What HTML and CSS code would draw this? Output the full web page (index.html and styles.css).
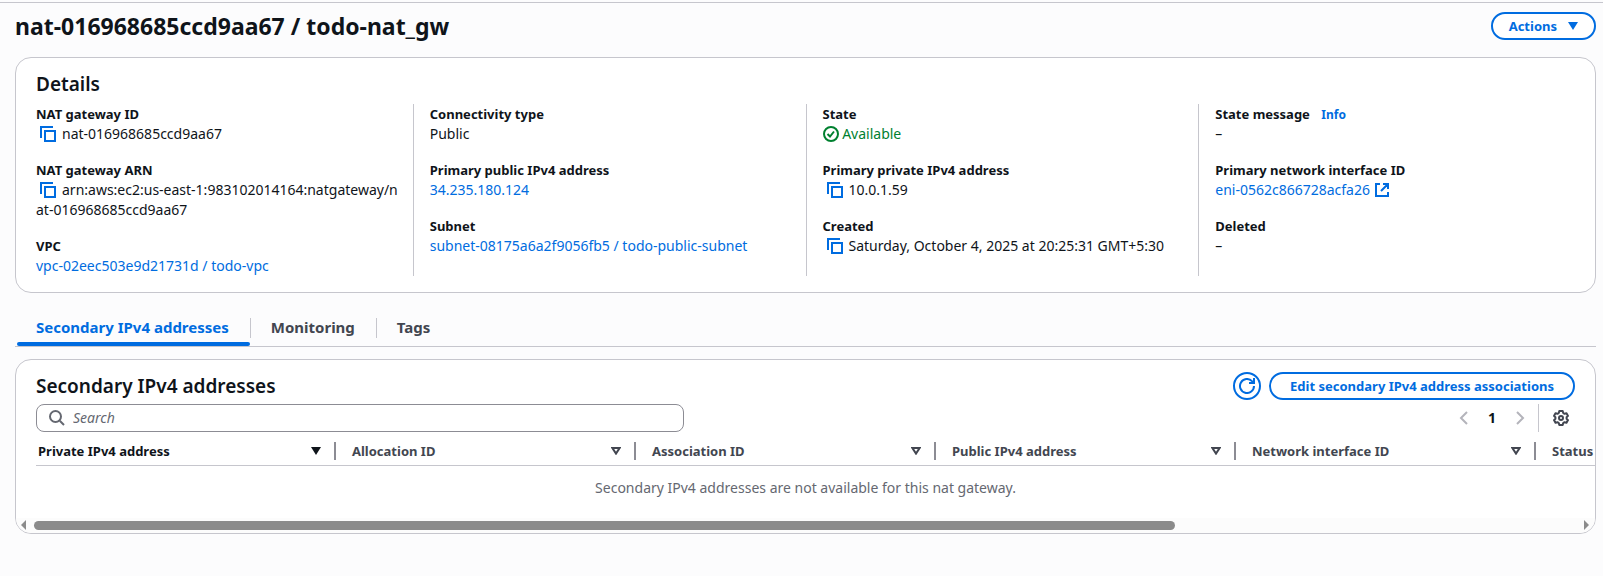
FILE: index.html
```html
<!DOCTYPE html>
<html lang="en">
<head>
<meta charset="utf-8">
<meta name="viewport" content="width=device-width, initial-scale=1">
<title>nat-016968685ccd9aa67 / todo-nat_gw</title>
<link rel="stylesheet" href="styles.css">
</head>
<body>
<svg class="defs" aria-hidden="true">
  <symbol id="copy" viewBox="0 0 16 16"><path d="M1 12V1h12M5 5h10v10H5z" fill="none" stroke="currentColor" stroke-width="2"/></symbol>
  <symbol id="sort" viewBox="0 0 10 8"><path d="M1.4 1h7.2L5 6.6z" fill="none" stroke="currentColor" stroke-width="2"/></symbol>
  <symbol id="caret" viewBox="0 0 10 8"><path d="M0 0h10L5 8z" fill="currentColor"/></symbol>
</svg>
<main class="page">
  <header class="page-header">
    <h1>nat-016968685ccd9aa67 / todo-nat_gw</h1>
    <button class="btn" type="button">Actions <svg class="caret"><use href="#caret"/></svg></button>
  </header>

  <section class="card details">
    <h2>Details</h2>
    <div class="columns">
      <dl class="column">
        <div><dt>NAT gateway ID</dt><dd><button class="copy" type="button" aria-label="Copy NAT gateway ID"><svg><use href="#copy"/></svg></button>nat-016968685ccd9aa67</dd></div>
        <div><dt>NAT gateway ARN</dt><dd><button class="copy" type="button" aria-label="Copy NAT gateway ARN"><svg><use href="#copy"/></svg></button>arn:aws:ec2:us-east-1:983102014164:natgateway/nat-016968685ccd9aa67</dd></div>
        <div><dt>VPC</dt><dd><a href="#">vpc-02eec503e9d21731d / todo-vpc</a></dd></div>
      </dl>
      <dl class="column">
        <div><dt>Connectivity type</dt><dd>Public</dd></div>
        <div><dt>Primary public IPv4 address</dt><dd><a href="#">34.235.180.124</a></dd></div>
        <div><dt>Subnet</dt><dd><a href="#">subnet-08175a6a2f9056fb5 / todo-public-subnet</a></dd></div>
      </dl>
      <dl class="column">
        <div><dt>State</dt><dd class="ok"><svg class="icon" viewBox="0 0 16 16"><g fill="none" stroke="currentColor" stroke-width="2"><circle cx="8" cy="8" r="7"/><path d="M4.500 8l2.500 2.500 4-5"/></g></svg> Available</dd></div>
        <div><dt>Primary private IPv4 address</dt><dd><button class="copy" type="button" aria-label="Copy address"><svg><use href="#copy"/></svg></button>10.0.1.59</dd></div>
        <div><dt>Created</dt><dd><button class="copy" type="button" aria-label="Copy date"><svg><use href="#copy"/></svg></button>Saturday, October 4, 2025 at 20:25:31 GMT+5:30</dd></div>
      </dl>
      <dl class="column">
        <div><dt>State message <a class="info" href="#">Info</a></dt><dd>–</dd></div>
        <div><dt>Primary network interface ID</dt><dd><a href="#">eni-0562c866728acfa26 <svg class="icon" viewBox="0 0 16 16"><path d="M6 2H2v12h12v-4M9 2h5v5M14 2L7 9" fill="none" stroke="currentColor" stroke-width="2"/></svg></a></dd></div>
        <div><dt>Deleted</dt><dd>–</dd></div>
      </dl>
    </div>
  </section>

  <div class="tabs" role="tablist">
    <button class="tab active" type="button" role="tab" aria-selected="true">Secondary IPv4 addresses</button>
    <button class="tab" type="button" role="tab" aria-selected="false">Monitoring</button>
    <button class="tab" type="button" role="tab" aria-selected="false">Tags</button>
  </div>

  <section class="card list">
    <div class="list-head">
      <h2>Secondary IPv4 addresses</h2>
      <div class="actions">
        <button class="btn round" type="button" aria-label="Refresh"><svg viewBox="0 0 16 16"><path d="M15 8a7 7 0 1 1-2-4.900L15 5M15 0v5h-5" fill="none" stroke="currentColor" stroke-width="2"/></svg></button>
        <button class="btn wide" type="button">Edit secondary IPv4 address associations</button>
      </div>
    </div>
    <div class="tools">
      <label class="search">
        <svg viewBox="0 0 16 16"><path d="M11 11l4 4M12 6.500a5.500 5.500 0 1 1-11 0a5.500 5.500 0 0 1 11 0z" fill="none" stroke="currentColor" stroke-width="2"/></svg>
        <input type="search" placeholder="Search" aria-label="Search">
      </label>
      <div class="pager">
        <button class="step" type="button" aria-label="Previous page"><svg viewBox="0 0 16 16"><path d="M11 2L5 8l6 6" fill="none" stroke="currentColor" stroke-width="2"/></svg></button>
        <button class="step current" type="button">1</button>
        <button class="step" type="button" aria-label="Next page"><svg viewBox="0 0 16 16"><path d="M5 2l6 6-6 6" fill="none" stroke="currentColor" stroke-width="2"/></svg></button>
        <button class="gear" type="button" aria-label="Preferences"><svg viewBox="0 0 16 16"><g fill="none" stroke="currentColor" stroke-width="2" stroke-linejoin="round"><path d="M6.300 1h3.400l.5 2 1.300.8 2-.6 1.500 2.700L13.600 7.300v1.400L15 10.100l-1.500 2.700-2-.6-1.300.8-.5 2H6.300l-.5-2-1.300-.8-2 .6L1 10.100l1.400-1.400V7.300L1 5.900l1.500-2.700 2 .6L5.800 3z"/><circle cx="8" cy="8" r="2"/></g></svg></button>
      </div>
    </div>
    <div class="scroll">
      <table>
        <thead><tr>
          <th class="sorted"><div>Private IPv4 address<svg class="caret"><use href="#caret"/></svg></div></th>
          <th><div>Allocation ID<svg class="caret"><use href="#sort"/></svg></div></th>
          <th><div>Association ID<svg class="caret"><use href="#sort"/></svg></div></th>
          <th><div>Public IPv4 address<svg class="caret"><use href="#sort"/></svg></div></th>
          <th><div>Network interface ID<svg class="caret"><use href="#sort"/></svg></div></th>
          <th><div>Status</div></th>
        </tr></thead>
        <tbody><tr><td colspan="6"><div class="empty">Secondary IPv4 addresses are not available for this nat gateway.</div></td></tr></tbody>
      </table>
    </div>
    <div class="scrollbar" aria-hidden="true">
      <svg viewBox="0 0 5 10"><path d="M5 0v10L0 5z"/></svg>
      <div class="track"><div class="thumb"></div></div>
      <svg viewBox="0 0 5 10"><path d="M0 0v10l5-5z"/></svg>
    </div>
  </section>
</main>
</body>
</html>
```
FILE: styles.css
```css
* { box-sizing: border-box; }
body {
  margin: 0;
  background: #fcfcfd;
  color: #0f141a;
  font: 14px/20px "Noto Sans", "Open Sans", sans-serif;
}
h1, h2, dl, dd { margin: 0; }
a { color: #006ce0; text-decoration: none; }
button { font: inherit; color: inherit; background: none; border: 0; padding: 0; cursor: pointer; }
.defs { display: none; }

.page { margin-top: 2px; border-top: 1px solid #c6c6cd; padding: 7px 7px 24px 15px; }
.page-header { display: flex; justify-content: space-between; align-items: center; margin-bottom: 15px; }
h1 { font-size: 23px; line-height: 32px; }
h2 { font-size: 19px; line-height: 28px; font-weight: 600; }

.btn {
  display: inline-flex; align-items: center; justify-content: center; gap: 11px;
  height: 28px; padding: 0 16px;
  border: 2px solid #006ce0; border-radius: 20px;
  background: #fff; color: #006ce0; font-size: 13px; font-weight: 700;
}
.wide { padding: 0 19px; }
.round { width: 28px; padding: 0; }
.round svg { width: 16px; height: 16px; flex: none; }
.caret { width: 10px; height: 8px; flex: none; }

.card { border: 1px solid #c6c6cd; border-radius: 16px; background: #fff; }
.details { padding: 12px 20px 16px; }
.details h2 { margin-bottom: 6px; }
.columns { display: grid; grid-template-columns: repeat(4, 1fr); margin: 0 -16px; }
.column { display: flex; flex-direction: column; gap: 16px; padding: 0 12px 0 16px; min-width: 0; }
.column + .column { border-left: 1px solid #c6c6cd; }
dt { font-size: 13px; font-weight: 700; }
dd { word-break: break-all; }
.copy { padding: 0 6px 0 4px; vertical-align: middle; height: 16px; margin-top: -2px; }
.copy svg { display: block; width: 16px; height: 16px; color: #006ce0; }
.icon { width: 16px; height: 16px; vertical-align: middle; margin: -4px 0 -2px; }
.ok { color: #00802f; }
.info { font-size: 12px; line-height: 16px; margin-left: 8px; }

.tabs { display: flex; margin-top: 16px; border-bottom: 1px solid #c6c6cd; }
.tab {
  position: relative;
  height: 38px; padding: 0 21px 2px; margin-bottom: -1px;
  font-size: 15px; line-height: 20px; font-weight: 700; color: #424650;
}
.tab + .tab::before { content: ""; position: absolute; left: 0; top: 9px; height: 20px; border-left: 1px solid #c6c6cd; }
.active { color: #006ce0; }
.active::after { content: ""; position: absolute; left: 2px; right: 0; bottom: 1px; height: 4px; border-radius: 2px; background: #006ce0; }

.list { margin-top: 12px; overflow: hidden; }
.list-head { display: flex; justify-content: space-between; align-items: center; padding: 12px 20px 4px; }
.actions { display: flex; gap: 8px; }
.tools { display: flex; justify-content: space-between; padding: 0 20px; }
.search {
  display: flex; align-items: center; gap: 8px;
  width: 648px; height: 28px; padding: 0 12px;
  border: 1px solid #8c8c94; border-radius: 8px; color: #656871;
}
.search svg { width: 16px; height: 16px; flex: none; }
.search input { flex: 1; min-width: 0; border: 0; outline: 0; padding: 0; background: none; font: inherit; }
.search input::placeholder { color: #656871; font-style: italic; opacity: 1; }
.pager { display: flex; align-items: center; }
.step { display: grid; place-items: center; width: 28px; height: 28px; color: #b4b4bb; }
.step svg, .gear svg { width: 16px; height: 16px; display: block; }
.current { color: #0f141a; font-weight: 700; }
.gear { height: 28px; margin-left: 4px; padding: 0 6px 0 14px; border-left: 1px solid #c6c6cd; color: #424650; }

.scroll { overflow: hidden; container-type: inline-size; padding-left: 20px; }
table { width: 2110px; table-layout: fixed; border-collapse: collapse; }
th { width: 300px; height: 33px; padding: 0; text-align: left; font-size: 13px; font-weight: 700; color: #424650; border-bottom: 1px solid #c6c6cd; }
th:last-child { width: auto; }
th div { display: flex; align-items: center; justify-content: space-between; height: 18px; margin-top: 6px; padding: 0 13px 0 16px; border-right: 2px solid #8c8c94; }
th:first-child div { padding-left: 2px; }
.sorted { color: #0f141a; }
td { padding: 0; }
.empty { width: calc(100cqw - 20px); padding: 12px 0 20px; text-align: center; color: #656871; }
.scrollbar { display: flex; align-items: center; gap: 8px; height: 15px; padding: 0 6px 0 5px; background: #fcfcfc; }
.scrollbar svg { width: 5px; height: 10px; fill: #8b8b8b; }
.track { flex: 1; }
.thumb { width: 74%; height: 9px; border-radius: 5px; background: #8b8b8b; }
```
